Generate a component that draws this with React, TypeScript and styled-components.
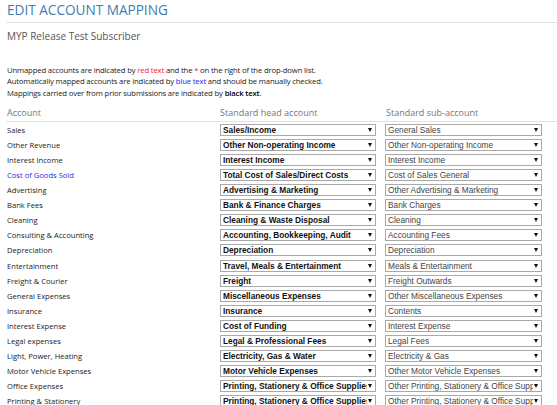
import styled, { createGlobalStyle } from "styled-components";

const GlobalStyle = createGlobalStyle`
  html, body {
    margin: 0;
    padding: 0;
    background: #fff;
  }
  body {
    font-family: "Open Sans", "Liberation Sans", sans-serif;
    color: #222;
    overflow: hidden;
  }
`;

const Page = styled.div`
  padding: 1px 0 0 6px;
`;

const Title = styled.h1`
  margin: 0;
  padding: 0 0 3px 1px;
  font-size: 13.6px;
  line-height: 18px;
  font-weight: 400;
  color: #3d7cb3;
  border-bottom: 1px solid #e2e2e2;
`;

const Subtitle = styled.h2`
  margin: 7px 0 0 1px;
  font-size: 10px;
  line-height: 13px;
  font-weight: 400;
  color: #555;
`;

const Notes = styled.div`
  margin: 21.5px 0 0 1px;
  font-size: 7.7px;
  line-height: 11.7px;
  letter-spacing: -0.15px;
  color: #222;

  & p {
    margin: 0;
  }
`;

const Marked = styled.span<{ $tone: "red" | "blue" | "black" }>`
  color: ${(p) => (p.$tone === "red" ? "#ff2020" : p.$tone === "blue" ? "#2020ff" : "#000")};
  font-weight: ${(p) => (p.$tone === "black" ? 600 : 400)};
`;

const Grid = styled.div`
  display: grid;
  grid-template-columns: 205px 156px 157px;
  column-gap: 9px;
`;

const HeadRow = styled(Grid)`
  margin-top: 7.5px;
  padding-bottom: 2px;
  border-bottom: 1px solid #e2e2e2;
  font-size: 9px;
  line-height: 12px;
  color: #777;
`;

const HeadCell = styled.div<{ $shift?: number }>`
  padding-left: ${(p) => p.$shift ?? 0}px;
`;

const Row = styled(Grid)`
  height: 15.1px;
  align-items: center;
`;

const AccountName = styled.div<{ $auto?: boolean }>`
  padding-left: 1px;
  font-size: 7.6px;
  color: ${(p) => (p.$auto ? "#2a2ad6" : "#222")};
  white-space: nowrap;
`;

const Select = styled.div<{ $bold?: boolean }>`
  position: relative;
  box-sizing: border-box;
  height: 12px;
  border: 1px solid #a9a9a9;
  background: #fff;
  padding: 0 8px 0 2px;
  font-family: "Liberation Sans", Arial, sans-serif;
  font-size: 8.3px;
  line-height: 10px;
  font-weight: ${(p) => (p.$bold ? 700 : 400)};
  color: ${(p) => (p.$bold ? "#111" : "#444")};
`;

const SelectText = styled.span`
  display: block;
  white-space: nowrap;
  overflow: hidden;
`;

const Arrow = styled.span`
  position: absolute;
  right: 3px;
  top: 3px;
  width: 0;
  height: 0;
  border-left: 2.5px solid transparent;
  border-right: 2.5px solid transparent;
  border-top: 4px solid #111;
`;

type Mapping = { account: string; head: string; sub: string; auto?: boolean };

const rows: Mapping[] = [
  { account: "Sales", head: "Sales/Income", sub: "General Sales" },
  { account: "Other Revenue", head: "Other Non-operating Income", sub: "Other Non-operating Income" },
  { account: "Interest Income", head: "Interest Income", sub: "Interest Income" },
  { account: "Cost of Goods Sold", head: "Total Cost of Sales/Direct Costs", sub: "Cost of Sales General", auto: true },
  { account: "Advertising", head: "Advertising & Marketing", sub: "Other Advertising & Marketing" },
  { account: "Bank Fees", head: "Bank & Finance Charges", sub: "Bank Charges" },
  { account: "Cleaning", head: "Cleaning & Waste Disposal", sub: "Cleaning" },
  { account: "Consulting & Accounting", head: "Accounting, Bookkeeping, Audit", sub: "Accounting Fees" },
  { account: "Depreciation", head: "Depreciation", sub: "Depreciation" },
  { account: "Entertainment", head: "Travel, Meals & Entertainment", sub: "Meals & Entertainment" },
  { account: "Freight & Courier", head: "Freight", sub: "Freight Outwards" },
  { account: "General Expenses", head: "Miscellaneous Expenses", sub: "Other Miscellaneous Expenses" },
  { account: "Insurance", head: "Insurance", sub: "Contents" },
  { account: "Interest Expense", head: "Cost of Funding", sub: "Interest Expense" },
  { account: "Legal expenses", head: "Legal & Professional Fees", sub: "Legal Fees" },
  { account: "Light, Power, Heating", head: "Electricity, Gas & Water", sub: "Electricity & Gas" },
  { account: "Motor Vehicle Expenses", head: "Motor Vehicle Expenses", sub: "Other Motor Vehicle Expenses" },
  { account: "Office Expenses", head: "Printing, Stationery & Office Supplies", sub: "Other Printing, Stationery & Office Supplies" },
  { account: "Printing & Stationery", head: "Printing, Stationery & Office Supplies", sub: "Other Printing, Stationery & Office Supplies" },
];

const App = () => {
  return (
    <>
      <GlobalStyle />
      <Page>
        <Title>EDIT ACCOUNT MAPPING</Title>
        <Subtitle>MYP Release Test Subscriber</Subtitle>
        <Notes>
          <p>
            Unmapped accounts are indicated by <Marked $tone="red">red text</Marked> and the{" "}
            <Marked $tone="red">*</Marked> on the right of the drop-down list.
          </p>
          <p>
            Automatically mapped accounts are indicated by <Marked $tone="blue">blue text</Marked> and
            should be manually checked.
          </p>
          <p>
            Mappings carried over from prior submissions are indicated by{" "}
            <Marked $tone="black">black text</Marked>.
          </p>
        </Notes>
        <HeadRow>
          <HeadCell $shift={1}>Account</HeadCell>
          <HeadCell>Standard head account</HeadCell>
          <HeadCell $shift={1}>Standard sub-account</HeadCell>
        </HeadRow>
        {rows.map((r, i) => (
          <Row key={i}>
            <AccountName $auto={r.auto}>{r.account}</AccountName>
            <Select $bold>
              <SelectText>{r.head}</SelectText>
              <Arrow />
            </Select>
            <Select>
              <SelectText>{r.sub}</SelectText>
              <Arrow />
            </Select>
          </Row>
        ))}
      </Page>
    </>
  );
};

export default App;
